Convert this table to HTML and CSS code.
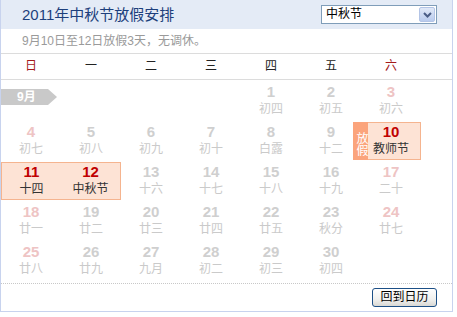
FILE: index.html
```html
<!DOCTYPE html>
<html lang="zh-CN">
<head>
<meta charset="utf-8">
<title>2011年中秋节放假安排</title>
<link rel="stylesheet" href="styles.css">
</head>
<body>
<div class="cal">
  <div class="head">
    <h1 class="title">2011年中秋节放假安排</h1>
    <div class="select">
      <span class="sel-text">中秋节</span>
      <span class="sel-btn"><svg width="9" height="6" viewBox="0 0 9 6"><path d="M1 1 L4.5 4.5 L8 1" fill="none" stroke="#4a5d86" stroke-width="2"/></svg></span>
    </div>
  </div>
  <div class="note">9月10日至12日放假3天，无调休。</div>
  <div class="weekdays">
    <div class="wk red">日</div><div class="wk">一</div><div class="wk">二</div><div class="wk">三</div><div class="wk">四</div><div class="wk">五</div><div class="wk red">六</div>
  </div>
  <div class="days">
    <div class="month-cell"><span class="flag">9月</span></div>
    <div class="day"><b class="num">1</b><span class="lun">初四</span></div>
    <div class="day"><b class="num">2</b><span class="lun">初五</span></div>
    <div class="day wkend"><b class="num">3</b><span class="lun">初六</span></div>

    <div class="day wkend"><b class="num">4</b><span class="lun">初七</span></div>
    <div class="day"><b class="num">5</b><span class="lun">初八</span></div>
    <div class="day"><b class="num">6</b><span class="lun">初九</span></div>
    <div class="day"><b class="num">7</b><span class="lun">初十</span></div>
    <div class="day"><b class="num">8</b><span class="lun">白露</span></div>
    <div class="day"><b class="num">9</b><span class="lun">十二</span></div>
    <div class="day hol single"><span class="tag">放假</span><b class="num">10</b><span class="lun">教师节</span></div>

    <div class="day hol first"><b class="num">11</b><span class="lun">十四</span></div>
    <div class="day hol last"><b class="num">12</b><span class="lun">中秋节</span></div>
    <div class="day"><b class="num">13</b><span class="lun">十六</span></div>
    <div class="day"><b class="num">14</b><span class="lun">十七</span></div>
    <div class="day"><b class="num">15</b><span class="lun">十八</span></div>
    <div class="day"><b class="num">16</b><span class="lun">十九</span></div>
    <div class="day wkend"><b class="num">17</b><span class="lun">二十</span></div>

    <div class="day wkend"><b class="num">18</b><span class="lun">廿一</span></div>
    <div class="day"><b class="num">19</b><span class="lun">廿二</span></div>
    <div class="day"><b class="num">20</b><span class="lun">廿三</span></div>
    <div class="day"><b class="num">21</b><span class="lun">廿四</span></div>
    <div class="day"><b class="num">22</b><span class="lun">廿五</span></div>
    <div class="day"><b class="num">23</b><span class="lun">秋分</span></div>
    <div class="day wkend"><b class="num">24</b><span class="lun">廿七</span></div>

    <div class="day wkend"><b class="num">25</b><span class="lun">廿八</span></div>
    <div class="day"><b class="num">26</b><span class="lun">廿九</span></div>
    <div class="day"><b class="num">27</b><span class="lun">九月</span></div>
    <div class="day"><b class="num">28</b><span class="lun">初二</span></div>
    <div class="day"><b class="num">29</b><span class="lun">初三</span></div>
    <div class="day"><b class="num">30</b><span class="lun">初四</span></div>
  </div>
  <div class="foot"><button class="back">回到日历</button></div>
</div>
</body>
</html>
```
FILE: styles.css
```css
* { box-sizing: border-box; }
body {
  margin: 0;
  background: #fff;
  font-family: "Liberation Sans", "Noto Sans CJK SC", sans-serif;
}
.cal {
  width: 453px;
  height: 312px;
  border: 1px solid #c8d3ee;
  border-top: 0;
}
.head {
  height: 29px;
  background: #e4ebf6;
  display: flex;
  align-items: center;
  justify-content: space-between;
  padding: 0 15px 0 21px;
}
.title {
  margin: 0;
  font-size: 15px;
  font-weight: normal;
  color: #1d3f7c;
  line-height: 18px;
}
.select {
  width: 116px;
  height: 19px;
  border: 1px solid #7f9db9;
  background: #fff;
  display: flex;
  align-items: center;
  justify-content: space-between;
  padding: 0 1px 0 4px;
}
.sel-text {
  font-size: 12px;
  color: #000;
  line-height: 15px;
}
.sel-btn {
  width: 16px;
  height: 15px;
  border: 1px solid #b3c4e6;
  border-radius: 2px;
  background: linear-gradient(#e1e9f8, #b9cbee);
  display: flex;
  align-items: center;
  justify-content: center;
}
.note {
  height: 25px;
  border-bottom: 1px solid #dcdcdc;
  padding-left: 21px;
  font-size: 12px;
  line-height: 24px;
  color: #9a9a9a;
}
.weekdays {
  height: 26px;
  border-bottom: 1px solid #dcdcdc;
  display: grid;
  grid-template-columns: repeat(7, 60px);
}
.wk {
  text-align: center;
  font-size: 12px;
  line-height: 25px;
  color: #222;
}
.wk.red { color: #a41a1a; }
.days {
  display: grid;
  grid-template-columns: repeat(7, 60px);
  grid-auto-rows: 38px;
  row-gap: 2px;
  padding: 2px 0 3px;
}
.month-cell {
  grid-column: 1 / span 4;
  padding-top: 7px;
}
.flag {
  display: block;
  width: 56px;
  height: 16px;
  background: #c9c9c9;
  clip-path: polygon(0 0, 47px 0, 56px 50%, 47px 100%, 0 100%);
  color: #fff;
  font-weight: bold;
  font-size: 12px;
  line-height: 16px;
  padding-left: 16px;
}
.day {
  position: relative;
  display: flex;
  flex-direction: column;
  align-items: center;
  padding-top: 1px;
}
.num {
  font-size: 15px;
  line-height: 18px;
  color: #cfcfcf;
}
.lun {
  font-size: 12px;
  line-height: 17px;
  color: #cacaca;
}
.wkend .num { color: #eec4c4; }
.hol {
  background: #fde3d5;
  border: 1px solid #f5b48f;
  padding-top: 0;
}
.hol .num { color: #c00000; }
.hol .lun { color: #333; }
.hol.first { border-right: 0; }
.hol.last { border-left: 0; }
.tag {
  position: absolute;
  left: -9px;
  top: -1px;
  bottom: -1px;
  width: 15px;
  background: #fba47c;
  color: #fff;
  font-size: 12px;
  line-height: 13px;
  text-align: center;
  padding-top: 5px;
  writing-mode: vertical-rl;
  display: flex;
  align-items: center;
  justify-content: center;
}
.foot {
  border-top: 1px dotted #c8c8c8;
  height: 27px;
  display: flex;
  justify-content: flex-end;
  align-items: flex-start;
  padding: 4px 15px 0 0;
}
.back {
  width: 65px;
  height: 19px;
  margin: 0;
  padding: 0;
  border: 1px solid #1c4f86;
  border-radius: 3px;
  background: linear-gradient(#ffffff, #f0f0ee 60%, #d8d8d4);
  font-family: "Liberation Sans", "Noto Sans CJK SC", sans-serif;
  font-size: 12px;
  line-height: 17px;
  color: #000;
}
```
